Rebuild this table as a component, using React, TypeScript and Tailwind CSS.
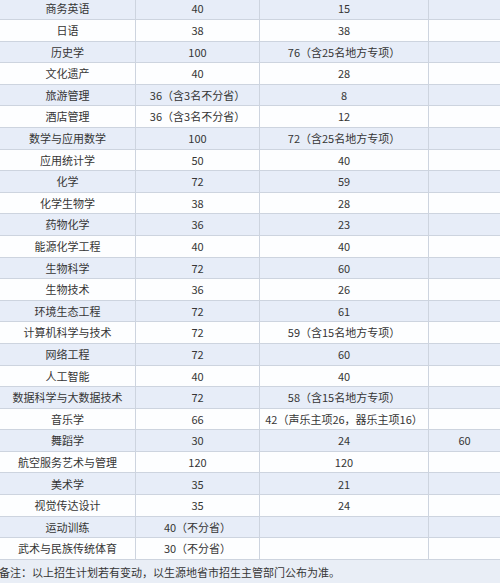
import React from 'react';

type Row = [string, string, string, string?];

const rows: Row[] = [
  ['商务英语', '40', '15'],
  ['日语', '38', '38'],
  ['历史学', '100', '76（含25名地方专项）'],
  ['文化遗产', '40', '28'],
  ['旅游管理', '36（含3名不分省）', '8'],
  ['酒店管理', '36（含3名不分省）', '12'],
  ['数学与应用数学', '100', '72（含25名地方专项）'],
  ['应用统计学', '50', '40'],
  ['化学', '72', '59'],
  ['化学生物学', '38', '28'],
  ['药物化学', '36', '23'],
  ['能源化学工程', '40', '40'],
  ['生物科学', '72', '60'],
  ['生物技术', '36', '26'],
  ['环境生态工程', '72', '61'],
  ['计算机科学与技术', '72', '59（含15名地方专项）'],
  ['网络工程', '72', '60'],
  ['人工智能', '40', '40'],
  ['数据科学与大数据技术', '72', '58（含15名地方专项）'],
  ['音乐学', '66', '42（声乐主项26，器乐主项16）'],
  ['舞蹈学', '30', '24', '60'],
  ['航空服务艺术与管理', '120', '120'],
  ['美术学', '35', '21'],
  ['视觉传达设计', '35', '24'],
  ['运动训练', '40（不分省）', ''],
  ['武术与民族传统体育', '30（不分省）', ''],
];

export default function App() {
  return (
    <div
      className="w-[500px] h-[583px] overflow-hidden bg-white text-[#353535] text-[11px]"
      style={{ fontFamily: '"Noto Sans CJK SC", "Noto Sans", sans-serif' }}
    >
      <div className="mt-[-1.6px]">
        {rows.map((r, i) => (
          <div
            key={i}
            className={`grid grid-cols-[136px_124px_169px_1fr] h-[21.6px] border-b border-[#cdd4df] ${
              i % 2 === 0 ? 'bg-[#e7edf8]' : 'bg-[#fdfeff]'
            }`}
          >
            <div className="flex items-center justify-center border-r border-[#cdd4df] whitespace-nowrap">{r[0]}</div>
            <div className="flex items-center justify-center border-r border-[#cdd4df] whitespace-nowrap">{r[1]}</div>
            <div className="flex items-center justify-center border-r border-[#cdd4df] whitespace-nowrap">{r[2]}</div>
            <div className="flex items-center justify-center whitespace-nowrap">{r[3] ?? ''}</div>
          </div>
        ))}
        <div className="h-[24px] bg-[#e9eef6] flex items-center pl-0 ml-[-1px] whitespace-nowrap">
          备注：以上招生计划若有变动，以生源地省市招生主管部门公布为准。
        </div>
      </div>
    </div>
  );
}
